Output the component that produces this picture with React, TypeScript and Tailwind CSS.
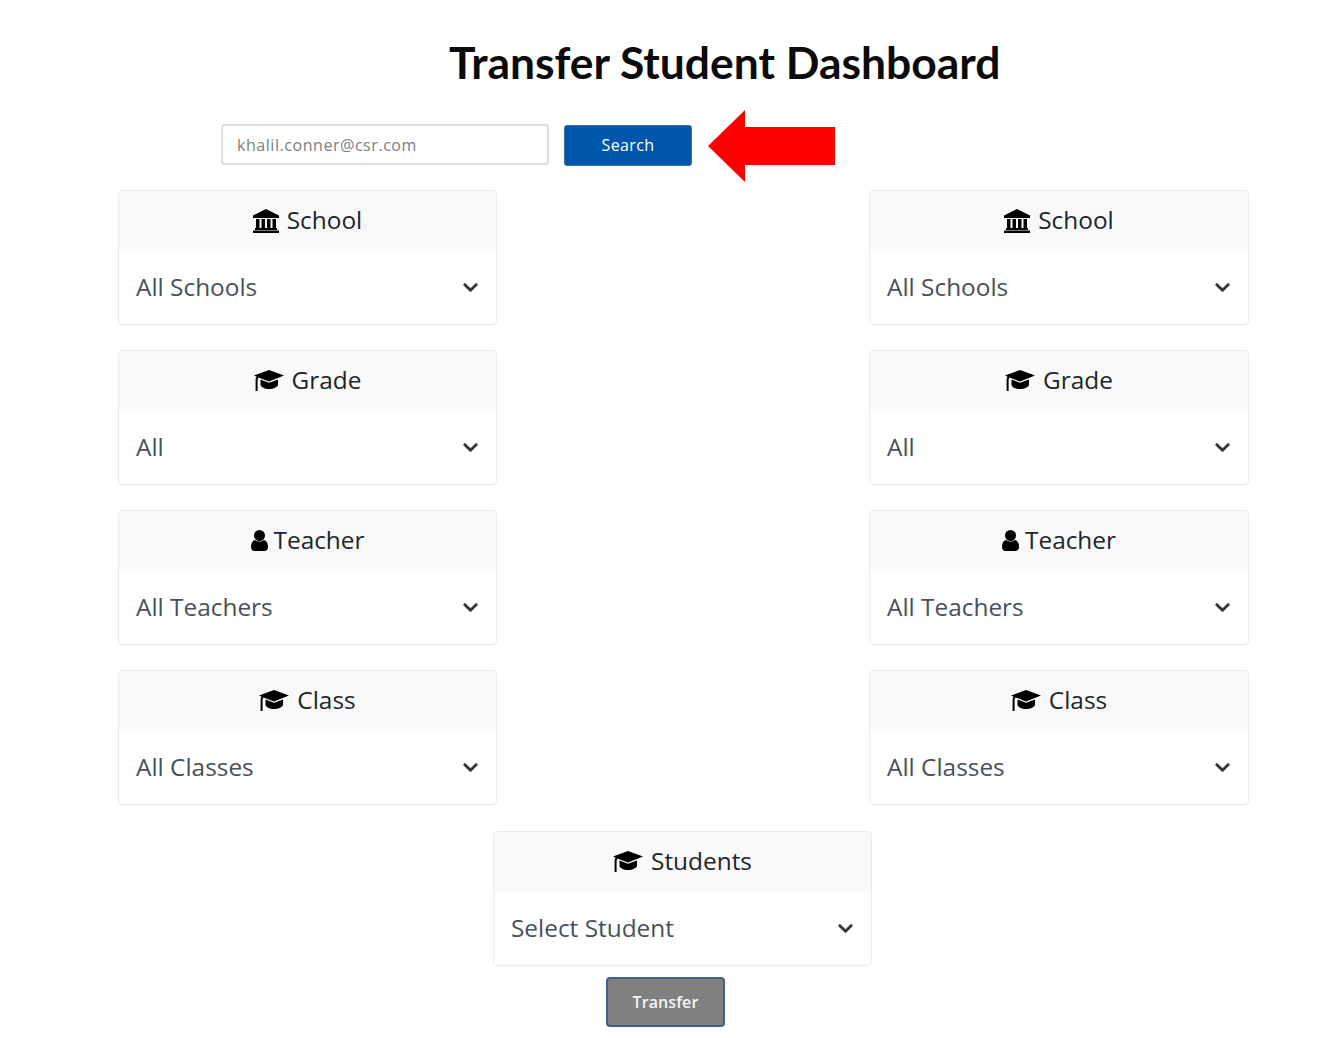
type IconName = "bank" | "cap" | "user";
type Filter = { icon: IconName; label: string; value: string };

const FILTERS: Filter[] = [
  { icon: "bank", label: "School", value: "All Schools" },
  { icon: "cap", label: "Grade", value: "All" },
  { icon: "user", label: "Teacher", value: "All Teachers" },
  { icon: "cap", label: "Class", value: "All Classes" },
];

// Older Font Awesome shapes, the icon packages only carry the newer ones
function BankIcon() {
  return (
    <svg viewBox="0 0 26 24" className="h-[24px] w-[26px]" fill="#000">
      <path d="M13 0L26 6.5V9H0V6.5Z" />
      <rect x="3" y="10" width="3.5" height="9" />
      <rect x="8.5" y="10" width="3.5" height="9" />
      <rect x="14" y="10" width="3.5" height="9" />
      <rect x="19.5" y="10" width="3.5" height="9" />
      <rect x="2" y="19" width="22" height="2" />
      <rect x="0" y="21.5" width="26" height="2.5" />
    </svg>
  );
}

function CapIcon() {
  return (
    <svg viewBox="0 0 30 21" className="h-[21px] w-[30px]" fill="#000">
      <path d="M15 0L30 5.5L15 11.5L4.5 7.4C3.9 8.2 3.7 9 3.6 10V21H1.6V9.6C1.7 8.4 2 7.4 2.6 6.7L0 5.5Z" />
      <path d="M6.5 9.6L15 12.7L24 9.6V14.5C24 17.2 19.5 19 15 19C10.5 19 6.5 17.2 6.5 14.5Z" />
    </svg>
  );
}

function UserIcon() {
  return (
    <svg viewBox="0 0 17 21" className="h-[21px] w-[17px]" fill="#000">
      <circle cx="8.5" cy="5.5" r="5.5" />
      <path d="M0 17C0 13 1.5 10.5 4 10Q8.5 13 13 10C15.5 10.5 17 13 17 17C17 19.5 15.5 21 13.5 21H3.5C1.5 21 0 19.5 0 17Z" />
    </svg>
  );
}

function Chevron() {
  return (
    <svg viewBox="0 0 16 16" className="h-[15px] w-[15px] text-[#343a40]" fill="none" stroke="currentColor">
      <path d="M2 5l6 6 6-6" strokeWidth="3.2" strokeLinecap="round" strokeLinejoin="round" />
    </svg>
  );
}

function FilterCard({ icon, label, value, wide }: Filter & { wide?: boolean }) {
  return (
    <div
      className={`h-[135px] overflow-hidden rounded-[4px] border border-[#ececec] bg-white ${
        wide ? "w-[380px]" : "w-[379px]"
      }`}
    >
      <div
        className={`flex h-[60px] items-center justify-center bg-[#f9f9f9] pb-[1px] text-[24.4px] text-[#212529] ${
          icon === "user" ? "gap-[6px]" : "gap-[8px]"
        }`}
      >
        {icon === "bank" && <BankIcon />}
        {icon === "cap" && <CapIcon />}
        {icon === "user" && <UserIcon />}
        <span>{label}</span>
      </div>
      <div className="flex h-[73px] items-center justify-between pr-[18px] pl-[17px] text-[24.4px] text-[#495057]">
        <span>{value}</span>
        <Chevron />
      </div>
    </div>
  );
}

function Arrow() {
  return (
    <svg viewBox="0 0 127 72" className="h-[72px] w-[127px]">
      <polygon points="0,36 37,0 37,17 127,17 127,55 37,55 37,72" fill="#ff0000" />
    </svg>
  );
}

export default function App() {
  return (
    <div className="h-[1038px] bg-white font-['Open_Sans',sans-serif]">
      <h1 className="pt-[34px] pl-[449px] font-['Lato',sans-serif] text-[44.4px] leading-[55px] font-bold text-[#0b0b0b]">
        Transfer Student Dashboard
      </h1>

      <div className="mt-[20px] flex h-[74px] items-center pl-[221px]">
        <div className="mb-[3px] flex h-[41px] w-[328px] items-center rounded-[4px] border-2 border-[#dedede] bg-white pl-[14px] text-[16px] tracking-[0.55px] text-[#7b7f83]">
          khalil.conner@csr.com
        </div>
        <button
          type="button"
          className="mb-[1px] ml-[15px] h-[41px] w-[128px] rounded-[3px] border border-[#3f72ab] bg-[#0056aa] pb-[2px] text-[16px] tracking-[0.4px] text-white"
        >
          Search
        </button>
        <div className="ml-[16px]">
          <Arrow />
        </div>
      </div>

      <div className="grid grid-cols-[379px_380px] justify-between gap-y-[25px] pt-[7px] pr-[88px] pl-[118px]">
        {FILTERS.map((f) => (
          <div key={f.label} className="contents">
            <FilterCard {...f} />
            <FilterCard {...f} wide />
          </div>
        ))}
      </div>

      <div className="mt-[26px] pl-[493px]">
        <FilterCard icon="cap" label="Students" value="Select Student" />
      </div>

      <div className="mt-[11px] pl-[606px]">
        <button
          type="button"
          className="h-[50px] w-[119px] rounded-[4px] border-2 border-[#3d6487] bg-[#808080] pb-[1px] text-[16px] font-semibold tracking-[0.1px] text-[#f4f4f4]"
        >
          Transfer
        </button>
      </div>
    </div>
  );
}
